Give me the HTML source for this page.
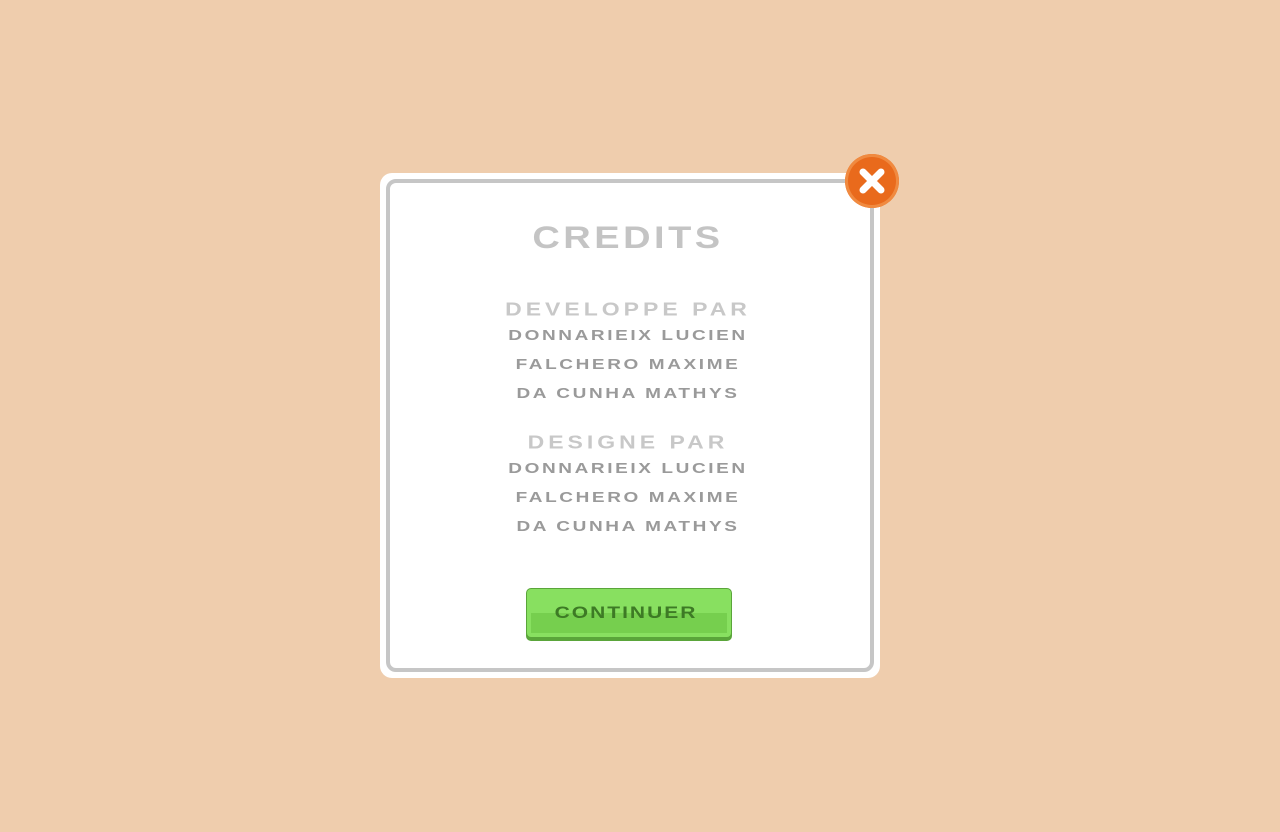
<!DOCTYPE html>
<html><head><style>
body{margin:0;width:1280px;height:832px;background:#efcdad;position:relative;overflow:hidden;font-family:"Liberation Sans",sans-serif;font-weight:bold;}
.panel{position:absolute;left:380px;top:173px;width:500px;height:505px;background:#fff;border-radius:12px;}
.inner{position:absolute;left:6px;top:6px;width:480px;height:485px;border:4px solid #c6c6c6;border-radius:10px;}
.t{position:absolute;left:-12px;width:1280px;text-align:center;white-space:nowrap;}
.h1{font-size:38px;color:#c4c4c4;letter-spacing:3.5px;top:217px;transform:scaleY(0.82);}
.h2{font-size:23px;color:#c8c8c8;letter-spacing:4px;transform:scaleY(0.8);}
.n{font-size:19px;color:#9a9a9a;letter-spacing:2.6px;transform:scaleY(0.8);}
.btn{position:absolute;left:526px;top:588px;width:206px;height:53px;box-sizing:border-box;border-radius:5px;background:#5aa53a;border:1px solid #5aa53a;}
.btn .f{position:absolute;left:0;top:0;right:0;height:48px;border-radius:4px;background:#88e060;}
.btn .b{position:absolute;left:4px;right:4px;top:24px;height:20px;background:#76cf4e;}
.btn span{position:absolute;left:-6px;right:0;top:12px;text-align:center;font-size:21px;color:#3d7a25;letter-spacing:2px;transform:scaleY(0.8);}
.close{position:absolute;left:845px;top:154px;width:54px;height:54px;border-radius:50%;background:#e96a1c;box-shadow:inset 0 0 0 3px #f08a40;}
</style></head><body>
<div class="panel"><div class="inner"></div></div>
<div class="close"><svg width="54" height="54" viewBox="0 0 54 54"><path d="M18 18L36 36M36 18L18 36" stroke="#fff" stroke-width="7" stroke-linecap="round"/></svg></div>
<div class="t h1">CREDITS</div>
<div class="t h2" style="top:296px">DEVELOPPE PAR</div>
<div class="t n" style="top:325px">DONNARIEIX LUCIEN</div>
<div class="t n" style="top:354px">FALCHERO MAXIME</div>
<div class="t n" style="top:383px">DA CUNHA MATHYS</div>
<div class="t h2" style="top:429px">DESIGNE PAR</div>
<div class="t n" style="top:458px">DONNARIEIX LUCIEN</div>
<div class="t n" style="top:487px">FALCHERO MAXIME</div>
<div class="t n" style="top:516px">DA CUNHA MATHYS</div>
<div class="btn"><div class="f"></div><div class="b"></div><span>CONTINUER</span></div>
</body></html>
